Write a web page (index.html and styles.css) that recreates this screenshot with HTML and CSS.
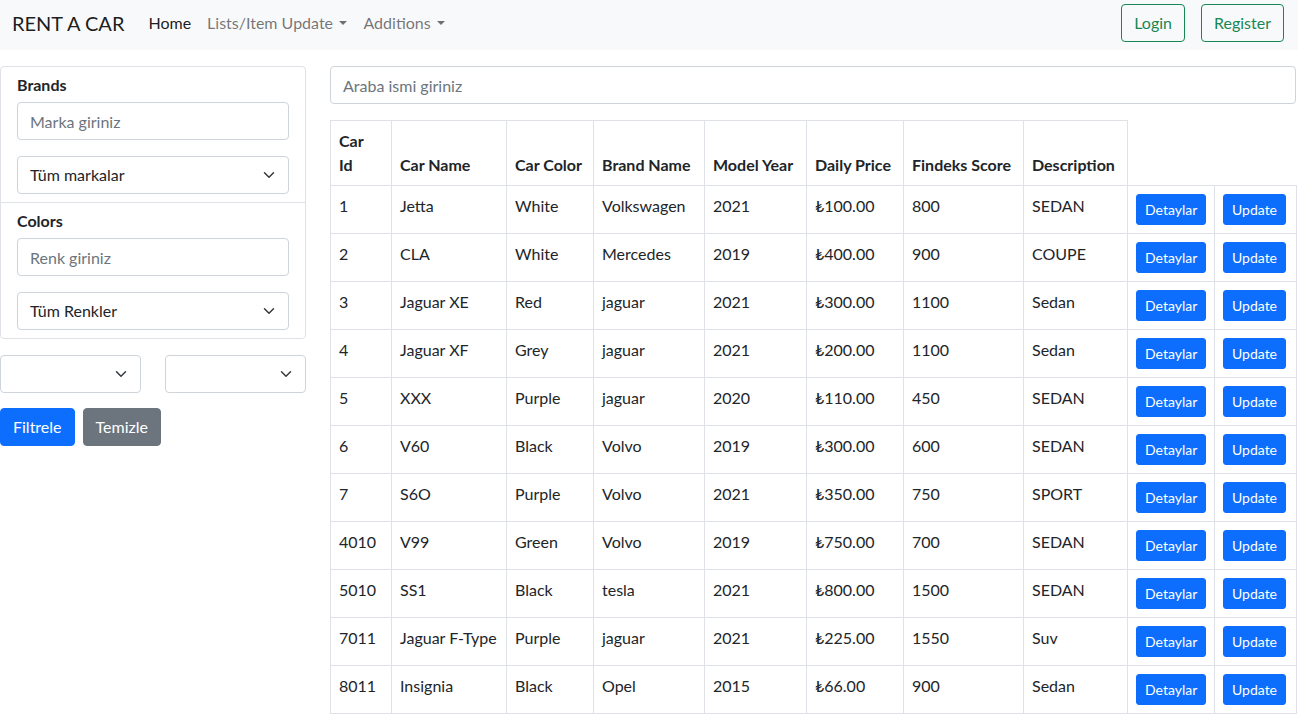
FILE: index.html
```html
<!DOCTYPE html>
<html lang="tr">
<head>
<meta charset="utf-8">
<title>Rent A Car</title>
<link rel="stylesheet" href="styles.css">
</head>
<body>
<nav class="navbar">
  <div class="nav-left">
    <a class="brand" href="#">RENT A CAR</a>
    <ul class="nav">
      <li><a class="nav-link active" href="#">Home</a></li>
      <li><a class="nav-link dropdown" href="#">Lists/Item Update</a></li>
      <li><a class="nav-link dropdown" href="#">Additions</a></li>
    </ul>
  </div>
  <div class="nav-right">
    <button class="btn btn-outline">Login</button>
    <button class="btn btn-outline">Register</button>
  </div>
</nav>

<main class="layout">
  <aside class="sidebar">
    <div class="filter-card">
      <div class="filter-group">
        <h6 class="filter-title">Brands</h6>
        <input class="form-control" placeholder="Marka giriniz">
        <div class="select-wrap spaced">
          <select class="form-select"><option>Tüm markalar</option></select>
          <svg class="chev" viewBox="0 0 16 16" width="16" height="12"><path d="M2 5l6 6 6-6" fill="none" stroke="#343a40" stroke-width="2" stroke-linecap="round" stroke-linejoin="round"/></svg>
        </div>
      </div>
      <div class="filter-group">
        <h6 class="filter-title">Colors</h6>
        <input class="form-control" placeholder="Renk giriniz">
        <div class="select-wrap spaced">
          <select class="form-select"><option>Tüm Renkler</option></select>
          <svg class="chev" viewBox="0 0 16 16" width="16" height="12"><path d="M2 5l6 6 6-6" fill="none" stroke="#343a40" stroke-width="2" stroke-linecap="round" stroke-linejoin="round"/></svg>
        </div>
      </div>
    </div>
    <div class="select-row">
      <div class="select-wrap">
        <select class="form-select"><option></option></select>
        <svg class="chev" viewBox="0 0 16 16" width="16" height="12"><path d="M2 5l6 6 6-6" fill="none" stroke="#343a40" stroke-width="2" stroke-linecap="round" stroke-linejoin="round"/></svg>
      </div>
      <div class="select-wrap">
        <select class="form-select"><option></option></select>
        <svg class="chev" viewBox="0 0 16 16" width="16" height="12"><path d="M2 5l6 6 6-6" fill="none" stroke="#343a40" stroke-width="2" stroke-linecap="round" stroke-linejoin="round"/></svg>
      </div>
    </div>
    <div class="btn-row">
      <button class="btn btn-primary">Filtrele</button>
      <button class="btn btn-secondary">Temizle</button>
    </div>
  </aside>

  <section class="content">
    <input class="form-control search" placeholder="Araba ismi giriniz">
    <table class="cars">
      <colgroup>
        <col class="c1"><col class="c2"><col class="c3"><col class="c4"><col class="c5">
        <col class="c6"><col class="c7"><col class="c8"><col class="c9"><col class="c10">
      </colgroup>
      <thead>
        <tr>
          <th><span class="stack">Car Id</span></th><th>Car Name</th><th>Car Color</th><th>Brand Name</th>
          <th>Model Year</th><th>Daily Price</th><th>Findeks Score</th><th>Description</th>
        </tr>
      </thead>
      <tbody>
        <tr><td>1</td><td>Jetta</td><td>White</td><td>Volkswagen</td><td>2021</td><td>₺100.00</td><td>800</td><td>SEDAN</td><td><button class="btn btn-primary btn-sm">Detaylar</button></td><td><button class="btn btn-primary btn-sm">Update</button></td></tr>
        <tr><td>2</td><td>CLA</td><td>White</td><td>Mercedes</td><td>2019</td><td>₺400.00</td><td>900</td><td>COUPE</td><td><button class="btn btn-primary btn-sm">Detaylar</button></td><td><button class="btn btn-primary btn-sm">Update</button></td></tr>
        <tr><td>3</td><td>Jaguar XE</td><td>Red</td><td>jaguar</td><td>2021</td><td>₺300.00</td><td>1100</td><td>Sedan</td><td><button class="btn btn-primary btn-sm">Detaylar</button></td><td><button class="btn btn-primary btn-sm">Update</button></td></tr>
        <tr><td>4</td><td>Jaguar XF</td><td>Grey</td><td>jaguar</td><td>2021</td><td>₺200.00</td><td>1100</td><td>Sedan</td><td><button class="btn btn-primary btn-sm">Detaylar</button></td><td><button class="btn btn-primary btn-sm">Update</button></td></tr>
        <tr><td>5</td><td>XXX</td><td>Purple</td><td>jaguar</td><td>2020</td><td>₺110.00</td><td>450</td><td>SEDAN</td><td><button class="btn btn-primary btn-sm">Detaylar</button></td><td><button class="btn btn-primary btn-sm">Update</button></td></tr>
        <tr><td>6</td><td>V60</td><td>Black</td><td>Volvo</td><td>2019</td><td>₺300.00</td><td>600</td><td>SEDAN</td><td><button class="btn btn-primary btn-sm">Detaylar</button></td><td><button class="btn btn-primary btn-sm">Update</button></td></tr>
        <tr><td>7</td><td>S6O</td><td>Purple</td><td>Volvo</td><td>2021</td><td>₺350.00</td><td>750</td><td>SPORT</td><td><button class="btn btn-primary btn-sm">Detaylar</button></td><td><button class="btn btn-primary btn-sm">Update</button></td></tr>
        <tr><td>4010</td><td>V99</td><td>Green</td><td>Volvo</td><td>2019</td><td>₺750.00</td><td>700</td><td>SEDAN</td><td><button class="btn btn-primary btn-sm">Detaylar</button></td><td><button class="btn btn-primary btn-sm">Update</button></td></tr>
        <tr><td>5010</td><td>SS1</td><td>Black</td><td>tesla</td><td>2021</td><td>₺800.00</td><td>1500</td><td>SEDAN</td><td><button class="btn btn-primary btn-sm">Detaylar</button></td><td><button class="btn btn-primary btn-sm">Update</button></td></tr>
        <tr><td>7011</td><td>Jaguar F-Type</td><td>Purple</td><td>jaguar</td><td>2021</td><td>₺225.00</td><td>1550</td><td>Suv</td><td><button class="btn btn-primary btn-sm">Detaylar</button></td><td><button class="btn btn-primary btn-sm">Update</button></td></tr>
        <tr><td>8011</td><td>Insignia</td><td>Black</td><td>Opel</td><td>2015</td><td>₺66.00</td><td>900</td><td>Sedan</td><td><button class="btn btn-primary btn-sm">Detaylar</button></td><td><button class="btn btn-primary btn-sm">Update</button></td></tr>
      </tbody>
    </table>
  </section>
</main>
</body>
</html>
```

FILE: styles.css
```css
* { box-sizing: border-box; }

body {
  margin: 0;
  font-family: "Lato", "Open Sans", "DejaVu Sans", sans-serif;
  font-size: 16px;
  line-height: 1.5;
  color: #212529;
  background: #fff;
}

/* ---------- navbar ---------- */
.navbar {
  display: flex;
  justify-content: space-between;
  align-items: center;
  height: 50px;
  padding: 0 14px 4px 12px;
  background: #f8f9fa;
}
.nav-left { display: flex; align-items: center; }
.brand {
  font-size: 20px;
  line-height: 30px;
  color: rgba(0, 0, 0, .9);
  text-decoration: none;
  margin-right: 16px;
}
.nav { display: flex; list-style: none; margin: 0; padding: 0; }
.nav-link {
  display: block;
  padding: 8px;
  color: rgba(0, 0, 0, .55);
  text-decoration: none;
}
.nav-link.active { color: rgba(0, 0, 0, .9); }
.dropdown::after {
  content: "";
  display: inline-block;
  margin-left: .4em;
  vertical-align: .255em;
  border-top: .3em solid;
  border-right: .3em solid transparent;
  border-left: .3em solid transparent;
  border-bottom: 0;
}
.nav-right { display: flex; gap: 16px; }

/* ---------- buttons ---------- */
.btn {
  font-family: inherit;
  font-size: 16px;
  line-height: 1.5;
  padding: 6px 12px;
  border-radius: 4px;
  border: 1px solid transparent;
  cursor: pointer;
}
.btn-outline { color: #198754; border-color: #198754; background: transparent; }
.btn-primary { color: #fff; background: #0d6efd; border-color: #0d6efd; }
.btn-secondary { color: #fff; background: #6c757d; border-color: #6c757d; }
.btn-sm { font-size: 14px; padding: 4px 8px; border-radius: 3px; }

/* ---------- layout ---------- */
.layout {
  display: grid;
  grid-template-columns: 306px 966px;
  column-gap: 24px;
  margin-top: 16px;
  align-items: start;
}

/* ---------- sidebar ---------- */
.filter-card { border: 1px solid #dee2e6; border-radius: 4px; }
.filter-group { padding: 8px 16px; }
.filter-group + .filter-group { border-top: 1px solid #dee2e6; }
.filter-title {
  margin: 0 0 8px;
  font-size: 16px;
  font-weight: 700;
  line-height: 1.2;
}

.form-control, .form-select {
  display: block;
  width: 100%;
  height: 38px;
  padding: 6px 12px;
  font-family: inherit;
  font-size: 16px;
  line-height: 1.5;
  color: #212529;
  background: #fff;
  border: 1px solid #ced4da;
  border-radius: 4px;
  outline: none;
}
.form-control::placeholder { color: #6c757d; }
.form-select { appearance: none; -webkit-appearance: none; padding-right: 36px; }

.select-wrap { position: relative; }
.select-wrap.spaced { margin-top: 16px; }
.chev {
  position: absolute;
  right: 12px;
  top: 13px;
  pointer-events: none;
}

.select-row {
  display: grid;
  grid-template-columns: 1fr 1fr;
  gap: 24px;
  margin-top: 16px;
}
.btn-row { display: flex; gap: 8px; margin-top: 15px; }

/* ---------- content ---------- */
.search { margin-bottom: 16px; }

.cars {
  width: 966px;
  table-layout: fixed;
  border-collapse: collapse;
}
.c1 { width: 61px; }
.c2 { width: 115px; }
.c3 { width: 87px; }
.c4 { width: 111px; }
.c5 { width: 102px; }
.c6 { width: 97px; }
.c7 { width: 120px; }
.c8 { width: 104px; }
.c9 { width: 87px; }
.c10 { width: 82px; }

.cars th, .cars td {
  padding: 8px;
  text-align: left;
  vertical-align: top;
  border: 1px solid #dee2e6;
}
.cars th { vertical-align: bottom; font-weight: 700; }
.stack { display: inline-block; width: min-content; }
.cars td .btn { display: block; }
```
